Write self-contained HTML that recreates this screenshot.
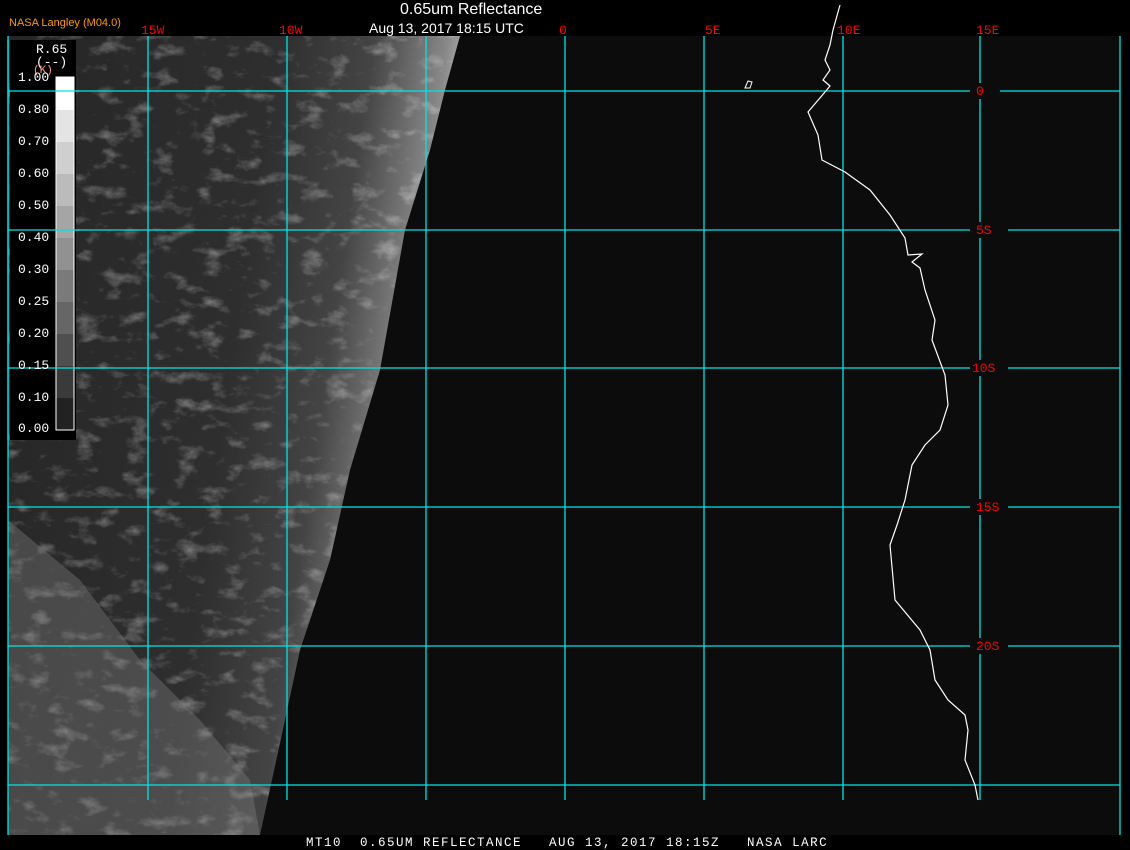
<!DOCTYPE html>
<html><head><style>
body{margin:0;background:#000;width:1130px;height:850px;overflow:hidden;position:relative;font-family:"Liberation Sans",sans-serif}
.t{position:absolute;color:#fff;white-space:pre}
.r{position:absolute;color:#f00;font-family:"Liberation Mono",monospace;font-size:13px;line-height:13px}
.lv{position:absolute;left:18px;color:#fff;font-family:"Liberation Mono",monospace;font-size:13px;line-height:13px}
</style></head><body>
<svg width="1130" height="850" style="position:absolute;left:0;top:0">
<defs>
<filter id="n" x="0" y="0" width="100%" height="100%">
<feTurbulence type="fractalNoise" baseFrequency="0.04 0.07" numOctaves="4" seed="3"/>
<feColorMatrix type="matrix" values="0 0 0 0 1 0 0 0 0 1 0 0 0 0 1 2.4 0 0 0 -1.3"/>
</filter>
<linearGradient id="g" x1="0" y1="0" x2="1" y2="0.25">
<stop offset="0" stop-color="#262626"/><stop offset="0.55" stop-color="#2e2e2e"/><stop offset="0.75" stop-color="#444"/><stop offset="0.9" stop-color="#888"/><stop offset="1" stop-color="#ddd"/>
</linearGradient>
<clipPath id="c"><polygon points="8,36 460,36 445,90 430,150 405,230 380,370 350,470 330,560 300,650 285,720 260,835 8,835"/></clipPath>
</defs>
<rect x="8" y="36" width="1112" height="799" fill="#0c0c0c"/>
<g clip-path="url(#c)">
<rect x="8" y="36" width="460" height="800" fill="url(#g)"/>
<rect x="8" y="36" width="460" height="800" filter="url(#n)" opacity="0.4"/>
<polygon points="8,520 80,580 140,660 200,720 250,780 260,835 8,835" fill="#888" opacity="0.35"/>
</g>
<g stroke="#00e5e5" stroke-width="1.3" fill="none">
<line x1="8" y1="36" x2="8" y2="835"/>
<line x1="1120" y1="36" x2="1120" y2="835"/>
<line x1="148" y1="36" x2="148" y2="800"/><line x1="287" y1="36" x2="287" y2="800"/>
<line x1="426" y1="36" x2="426" y2="800"/><line x1="565" y1="36" x2="565" y2="800"/>
<line x1="704" y1="36" x2="704" y2="800"/><line x1="843" y1="36" x2="843" y2="800"/>
<line x1="980" y1="36" x2="980" y2="83"/><line x1="980" y1="99" x2="980" y2="222"/><line x1="980" y1="238" x2="980" y2="360"/><line x1="980" y1="376" x2="980" y2="499"/><line x1="980" y1="515" x2="980" y2="638"/><line x1="980" y1="654" x2="980" y2="800"/>
<path d="M8 91H970M1000 91H1120M8 230H970M1008 230H1120M8 368H970M1008 368H1120M8 507H970M1008 507H1120M8 646H970M1008 646H1120M8 785H1120"/>
</g>
<polyline fill="none" stroke="#fff" stroke-width="1.2" points="840,5 833,30 830,45 825,60 830,70 823,80 830,86 825,92 808,112 818,135 822,160 845,172 870,190 890,215 905,238 908,255 922,254 912,262 920,268 925,290 935,320 932,340 945,375 948,405 940,430 925,445 912,465 905,500 897,525 890,545 895,600 920,630 930,650 935,680 948,700 965,715 968,730 965,760 975,785 978,800"/>
<path d="M745 88 L748 81 L752 82 L750 88 Z" fill="none" stroke="#fff" stroke-width="1"/>
<rect x="10" y="40" width="66" height="400" fill="#000"/>
<g>
<rect x="56" y="77" width="18" height="353" fill="#fff"/>
<rect x="56" y="110" width="18" height="32" fill="#e4e4e4"/>
<rect x="56" y="142" width="18" height="32" fill="#cfcfcf"/>
<rect x="56" y="174" width="18" height="32" fill="#bbb"/>
<rect x="56" y="206" width="18" height="32" fill="#a5a5a5"/>
<rect x="56" y="238" width="18" height="32" fill="#919191"/>
<rect x="56" y="270" width="18" height="32" fill="#7a7a7a"/>
<rect x="56" y="302" width="18" height="32" fill="#666"/>
<rect x="56" y="334" width="18" height="32" fill="#4f4f4f"/>
<rect x="56" y="366" width="18" height="32" fill="#3a3a3a"/>
<rect x="56" y="398" width="18" height="32" fill="#222"/>
<rect x="56" y="77" width="18" height="353" fill="none" stroke="#fff" stroke-width="1"/>
</g>
<line x1="10" y1="91" x2="80" y2="91" stroke="#00e5e5" stroke-width="1.3"/>
<line x1="10" y1="230" x2="80" y2="230" stroke="#00e5e5" stroke-width="1.3"/>
<line x1="10" y1="368" x2="80" y2="368" stroke="#00e5e5" stroke-width="1.3"/>
<line x1="8" y1="40" x2="8" y2="440" stroke="#00e5e5" stroke-width="1.3"/>
</svg>
<div class="t" style="left:400px;top:1px;font-size:16px">0.65um Reflectance</div>
<div class="t" style="left:369px;top:20px;font-size:14px">Aug 13, 2017 18:15 UTC</div>
<div class="t" style="left:9px;top:17px;font-size:11px;color:#f90">NASA Langley (M04.0)</div>
<div class="r" style="left:141px;top:24px">15W</div>
<div class="r" style="left:279px;top:24px">10W</div>
<div class="r" style="left:559px;top:24px">0</div>
<div class="r" style="left:705px;top:24px">5E</div>
<div class="r" style="left:837px;top:24px">10E</div>
<div class="r" style="left:976px;top:24px">15E</div>
<div class="r" style="left:976px;top:85px">0</div>
<div class="r" style="left:976px;top:224px">5S</div>
<div class="r" style="left:972px;top:362px">10S</div>
<div class="r" style="left:976px;top:501px">15S</div>
<div class="r" style="left:976px;top:640px">20S</div>
<div class="lv" style="left:36px;top:43px">R.65</div>
<div class="lv" style="left:36px;top:56px">(--)</div>
<div class="lv" style="left:33px;top:65px;color:#f97;font-size:11px">(K)</div>
<div class="lv" style="top:71px">1.00</div>
<div class="lv" style="top:103px">0.80</div>
<div class="lv" style="top:135px">0.70</div>
<div class="lv" style="top:167px">0.60</div>
<div class="lv" style="top:199px">0.50</div>
<div class="lv" style="top:231px">0.40</div>
<div class="lv" style="top:263px">0.30</div>
<div class="lv" style="top:295px">0.25</div>
<div class="lv" style="top:327px">0.20</div>
<div class="lv" style="top:359px">0.15</div>
<div class="lv" style="top:391px">0.10</div>
<div class="lv" style="top:422px">0.00</div>
<div class="t" style="left:306px;top:836px;font-family:'Liberation Mono',monospace;font-size:12.5px;letter-spacing:1.5px">MT10  0.65UM REFLECTANCE   AUG 13, 2017 18:15Z   NASA LARC</div>
</body></html>
